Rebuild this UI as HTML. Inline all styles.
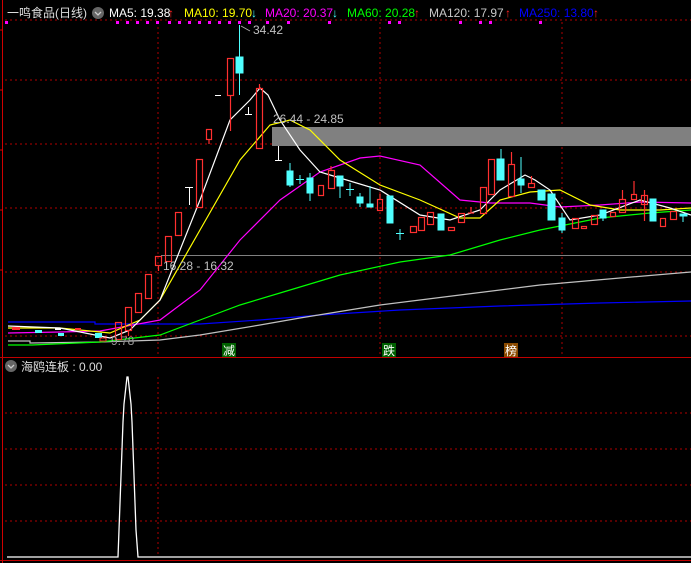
<!DOCTYPE html>
<html><head><meta charset="utf-8"><style>
body{margin:0;background:#000;width:691px;height:563px;overflow:hidden;font-family:"Liberation Sans","Noto Sans CJK SC",sans-serif}
svg{position:absolute;left:0;top:0}
text{font-family:"Liberation Sans","Noto Sans CJK SC",sans-serif}
</style></head><body>
<svg width="691" height="563" viewBox="0 0 691 563">
<g stroke="#b00000" stroke-width="1" stroke-dasharray="2,3">
<line x1="5" y1="20" x2="691" y2="20"/>
<line x1="5" y1="80" x2="691" y2="80"/>
<line x1="5" y1="144" x2="691" y2="144"/>
<line x1="5" y1="208" x2="691" y2="208"/>
<line x1="5" y1="272" x2="691" y2="272"/>
<line x1="5" y1="336" x2="691" y2="336"/>
<line x1="158" y1="22" x2="158" y2="355"/>
<line x1="380" y1="22" x2="380" y2="355"/>
<line x1="562" y1="22" x2="562" y2="355"/>
<line x1="5" y1="413" x2="691" y2="413"/>
<line x1="5" y1="449" x2="691" y2="449"/>
<line x1="5" y1="485" x2="691" y2="485"/>
<line x1="5" y1="521" x2="691" y2="521"/>
<line x1="158" y1="377" x2="158" y2="555"/>
</g>
<line x1="2.5" y1="0" x2="2.5" y2="563" stroke="#d00000"/>
<line x1="0" y1="357.5" x2="691" y2="357.5" stroke="#c00000"/>
<line x1="0" y1="560.5" x2="691" y2="560.5" stroke="#c00000"/>
<line x1="0" y1="30" x2="3" y2="30" stroke="#d00"/><line x1="0" y1="90" x2="3" y2="90" stroke="#d00"/><line x1="0" y1="150" x2="3" y2="150" stroke="#d00"/><line x1="0" y1="210" x2="3" y2="210" stroke="#d00"/><line x1="0" y1="270" x2="3" y2="270" stroke="#d00"/>
<rect x="272" y="127" width="419" height="19" fill="#808080"/>
<line x1="161" y1="255.5" x2="691" y2="255.5" stroke="#808080"/>
<!-- MA lines -->
<g fill="none" stroke-width="1.2">
<polyline stroke="#0000ff" points="8,322 95,322 95,324 200,324 260,320 320,315 400,310 500,306 600,303 691,301"/>
<polyline stroke="#c0c0c0" points="8,341 30,341 30,343 100,342 160,340 200,335 260,325 300,318 380,305 460,295 540,285 620,278 691,272"/>
<polyline stroke="#00ff00" points="8,345 32,345 100,342 160,335 200,320 240,305 280,293 340,275 400,262 450,255 500,240 540,230 600,218 650,213 691,210"/>
<polyline stroke="#ff00ff" points="8,333 60,332 100,331 160,320 200,290 240,240 280,200 320,172 360,158 380,156 420,165 460,200 490,203 530,203 560,207 600,205 640,202 691,203"/>
<polyline stroke="#ffff00" points="8,328 60,328 110,333 140,320 160,300 200,230 240,160 270,125 290,120 310,130 340,160 380,185 420,200 460,218 480,218 500,200 530,192 560,190 590,205 620,210 660,210 691,208"/>
<polyline stroke="#ffffff" points="8,326 60,328 110,338 130,330 160,300 200,200 230,120 250,100 260,88 268,95 280,120 300,150 320,172 340,178 380,190 420,215 450,220 480,210 500,190 525,175 535,180 550,190 570,220 600,215 640,200 670,208 691,215"/>
</g>
<!-- small early candles -->
<g>
<rect x="12" y="327" width="8" height="3" fill="#ff3030"/>
<rect x="35" y="330" width="7" height="3" fill="#50ffff"/>
<rect x="55" y="328" width="6" height="2" fill="#fff"/>
<rect x="58" y="333" width="6" height="3" fill="#50ffff"/>
<rect x="95" y="333" width="7" height="5" fill="#50ffff"/>
<rect x="100" y="338" width="6" height="3" fill="none" stroke="#ff3030"/>
<rect x="75" y="328" width="6" height="2" fill="#ff3030"/>
</g>
<g fill="none" stroke="#ff3030" stroke-width="1.2">
<rect x="115.5" y="322.5" width="6" height="17"/>
<rect x="125.5" y="307.5" width="6" height="23"/><line x1="128.5" y1="330" x2="128.5" y2="336"/>
<rect x="135.5" y="293.5" width="6" height="19"/>
<rect x="145.5" y="274.5" width="6" height="24"/>
<rect x="155.5" y="256.5" width="6" height="9"/><line x1="158.5" y1="266" x2="158.5" y2="271"/>
<rect x="165.5" y="236.5" width="6" height="25"/>
<rect x="175.5" y="212.5" width="6" height="23"/>
<rect x="196.5" y="159.5" width="6" height="48"/>
<rect x="206.5" y="129.5" width="5" height="10"/><line x1="209" y1="140" x2="209" y2="144"/>
<rect x="227.5" y="58.5" width="6" height="37"/><line x1="230.5" y1="96" x2="230.5" y2="131"/>
<rect x="256.5" y="88.5" width="6" height="60"/><line x1="259.5" y1="84" x2="259.5" y2="88"/>
<rect x="318.5" y="185.5" width="5" height="10"/>
<rect x="328.5" y="170.5" width="6" height="18"/><line x1="331" y1="166" x2="331" y2="170"/>
<rect x="377.5" y="199.5" width="5" height="11"/><line x1="380" y1="194" x2="380" y2="199"/>
<rect x="410.5" y="226.5" width="6" height="6"/>
<rect x="418.5" y="217.5" width="6" height="13"/>
<rect x="427.5" y="212.5" width="6" height="12"/>
<rect x="448.5" y="227.5" width="6" height="3"/>
<rect x="458.5" y="213.5" width="6" height="9"/>
<line x1="468" y1="213" x2="474" y2="213"/><line x1="471" y1="207" x2="471" y2="213"/>
<rect x="480.5" y="187.5" width="6" height="26"/>
<rect x="488.5" y="159.5" width="6" height="35"/>
<rect x="508.5" y="164.5" width="6" height="32"/><line x1="511.5" y1="152" x2="511.5" y2="164"/>
<rect x="528.5" y="183.5" width="6" height="4"/><line x1="531.5" y1="176" x2="531.5" y2="183"/>
<rect x="572.5" y="218.5" width="6" height="10"/>
<rect x="581.5" y="226.5" width="5" height="2"/>
<rect x="591.5" y="215.5" width="6" height="9"/>
<rect x="610.5" y="212.5" width="5" height="4"/>
<rect x="619.5" y="199.5" width="6" height="13"/><line x1="622.5" y1="190" x2="622.5" y2="199"/>
<rect x="631.5" y="194.5" width="5" height="5"/><line x1="634" y1="181" x2="634" y2="194"/>
<rect x="641.5" y="195.5" width="6" height="9"/><line x1="644.5" y1="190" x2="644.5" y2="221"/>
<rect x="660.5" y="218.5" width="5" height="8"/>
<rect x="670.5" y="211.5" width="6" height="8"/>
</g>
<g fill="#50ffff" stroke="#50ffff">
<rect x="236" y="57" width="7" height="16"/><line x1="239.5" y1="25" x2="239.5" y2="95"/>
<rect x="287" y="171" width="6" height="14"/><line x1="290" y1="163" x2="290" y2="187"/>
<line x1="296" y1="179.5" x2="304" y2="179.5"/><line x1="300" y1="175" x2="300" y2="184"/>
<rect x="307" y="178" width="6" height="15"/><line x1="310" y1="173" x2="310" y2="201"/>
<rect x="337" y="176" width="6" height="10"/><line x1="340" y1="186" x2="340" y2="198"/>
<line x1="346" y1="189.5" x2="354" y2="189.5"/><line x1="350" y1="183" x2="350" y2="196"/>
<rect x="357" y="197" width="6" height="6"/><line x1="360" y1="193" x2="360" y2="207"/>
<rect x="367" y="204" width="6" height="3"/><line x1="370" y1="186" x2="370" y2="207"/>
<rect x="387" y="196" width="6" height="27"/>
<line x1="396" y1="233.5" x2="404" y2="233.5"/><line x1="400" y1="229" x2="400" y2="240"/>
<rect x="438" y="214" width="6" height="16"/>
<rect x="497" y="159" width="7" height="21"/><line x1="501" y1="149" x2="501" y2="159"/>
<rect x="518" y="179" width="6" height="6"/><line x1="521" y1="157" x2="521" y2="193"/>
<rect x="538" y="190" width="7" height="10"/>
<rect x="548" y="194" width="7" height="26"/>
<rect x="559" y="218" width="6" height="12"/><line x1="562" y1="213" x2="562" y2="233"/>
<rect x="600" y="210" width="6" height="8"/><line x1="603" y1="218" x2="603" y2="221"/>
<rect x="650" y="199" width="6" height="22"/>
<rect x="680" y="214" width="7" height="2"/><line x1="683" y1="216" x2="683" y2="222"/>
</g>
<g stroke="#fff" fill="none">
<line x1="185" y1="187.5" x2="193" y2="187.5"/><line x1="189.5" y1="187" x2="189.5" y2="205"/>
<line x1="215" y1="95.5" x2="221" y2="95.5"/>
<line x1="245" y1="114.5" x2="252" y2="114.5"/><line x1="248.5" y1="107" x2="248.5" y2="114"/>
<line x1="275" y1="160.5" x2="282" y2="160.5"/><line x1="278.5" y1="146" x2="278.5" y2="160"/>
<line x1="241" y1="26" x2="250" y2="31" stroke="#aaa"/>
</g>
<g fill="#c0c0c0" font-size="12">
<text x="253" y="34">34.42</text>
<text x="273" y="123">26.44 - 24.85</text>
<text x="163" y="270">16.28 - 16.32</text>
<text x="111" y="345" fill="#999">9.78</text>
</g>
<rect x="222" y="343" width="14" height="14" fill="#006000"/><text x="223" y="355" font-size="12" fill="#fff">减</text>
<rect x="382" y="343" width="14" height="14" fill="#006000"/><text x="383" y="355" font-size="12" fill="#fff">跌</text>
<rect x="504" y="343" width="14" height="14" fill="#8a4a00"/><text x="505" y="355" font-size="12" fill="#fff">榜</text>
<!-- header -->
<g font-size="12">
<text x="7" y="17" fill="#ddd">一鸣食品(日线)</text>
<circle cx="98" cy="13" r="6" fill="#666"/><path d="M95 12 L98 15 L101 12" stroke="#ccc" fill="none" stroke-width="1.3"/>
<text x="109" y="17" fill="#fff">MA5: 19.38</text><text x="168" y="17" fill="#f22">↑</text>
<text x="184" y="17" fill="#ff0">MA10: 19.70</text><text x="251" y="17" fill="#4ff">↓</text>
<text x="265" y="17" fill="#f0f">MA20: 20.37</text><text x="332" y="17" fill="#4ff">↓</text>
<text x="347" y="17" fill="#0f0">MA60: 20.28</text><text x="414" y="17" fill="#f22">↑</text>
<text x="429" y="17" fill="#c8c8c8">MA120: 17.97</text><text x="505" y="17" fill="#f22">↑</text>
<text x="519" y="17" fill="#0000ff">MA250: 13.80</text><text x="593" y="17" fill="#f22">↑</text>
</g>
<g fill="#ff00ff">
<rect x="5" y="21" width="3" height="3"/><rect x="116" y="21" width="3" height="3"/><rect x="126" y="21" width="3" height="3"/><rect x="136" y="21" width="3" height="3"/><rect x="146" y="21" width="3" height="3"/><rect x="156" y="21" width="3" height="3"/><rect x="168" y="21" width="3" height="3"/><rect x="178" y="21" width="3" height="3"/><rect x="188" y="21" width="3" height="3"/><rect x="198" y="21" width="3" height="3"/><rect x="208" y="21" width="3" height="3"/><rect x="218" y="21" width="3" height="3"/><rect x="228" y="21" width="3" height="3"/><rect x="238" y="21" width="3" height="3"/><rect x="248" y="21" width="3" height="3"/><rect x="266" y="21" width="3" height="3"/><rect x="287" y="21" width="3" height="3"/><rect x="328" y="21" width="3" height="3"/><rect x="388" y="21" width="3" height="3"/><rect x="398" y="21" width="3" height="3"/><rect x="459" y="21" width="3" height="3"/><rect x="479" y="21" width="3" height="3"/><rect x="489" y="21" width="3" height="3"/><rect x="539" y="21" width="3" height="3"/>
</g>
<!-- sub panel -->
<circle cx="11" cy="366" r="6" fill="#666"/><path d="M8 365 L11 368 L14 365" stroke="#ccc" fill="none" stroke-width="1.3"/>
<text x="21" y="371" font-size="12" fill="#ddd">海鸥连板 : 0.00</text>
<polyline fill="none" stroke="#fff" stroke-width="1.3" points="7,557 118,557 119,530 120,503 121,476 122,449 123,422 124,404 125,395 126,386 127,377 128,377 129,386 130,395 131,404 132,422 133,449 134,476 135,503 136,530 138,557 691,557"/>
</svg>
</body></html>
